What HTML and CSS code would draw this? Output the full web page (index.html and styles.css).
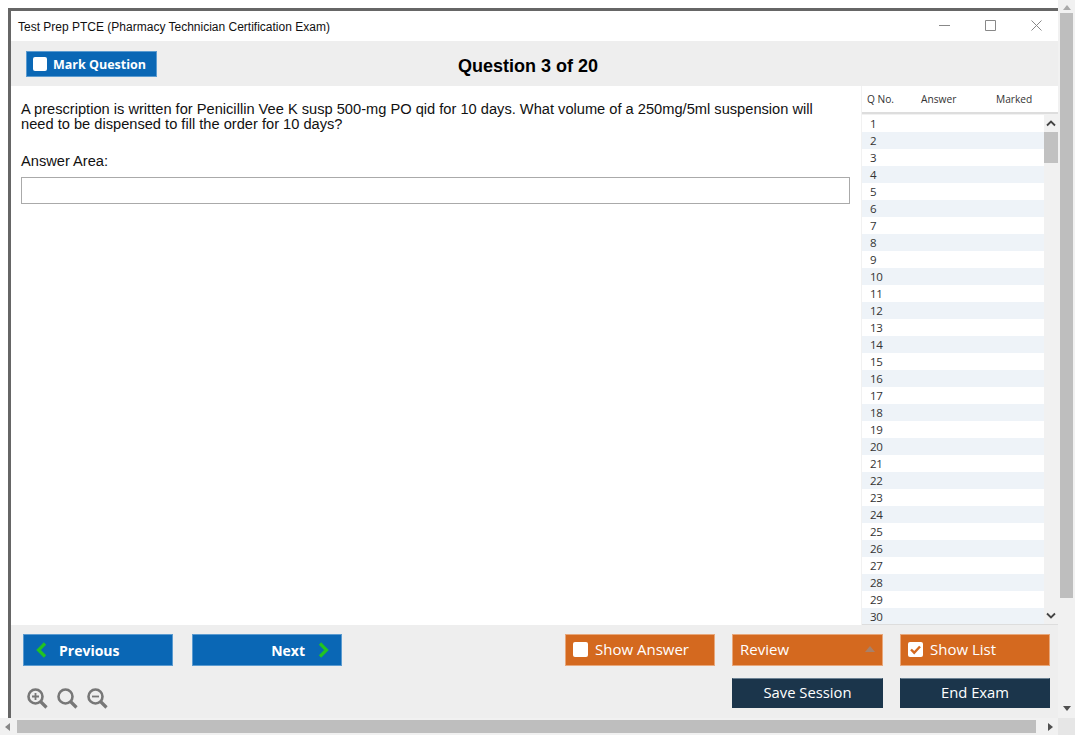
FILE: index.html
```html
<!DOCTYPE html>
<html lang="en">
<head>
  <meta charset="UTF-8">
  <meta name="viewport" content="width=device-width, initial-scale=1.0">
  <title>Test Prep PTCE</title>
  <link rel="stylesheet" href="styles.css">
</head>
<body>
  <div class="page">
    <div class="exam-window">
      <div class="title-bar">
        <span class="title-text">Test Prep PTCE (Pharmacy Technician Certification Exam)</span>
        <div class="window-controls">
          <svg width="11" height="11" viewBox="0 0 11 11"><path d="M0 5.500h11" stroke="#888" fill="none"/></svg>
          <svg width="11" height="11" viewBox="0 0 11 11"><path d="M.5.500h10v10H.5z" stroke="#888" fill="none"/></svg>
          <svg width="11" height="11" viewBox="0 0 11 11"><path d="M.5.500l10 10M10.500.500l-10 10" stroke="#888" fill="none"/></svg>
        </div>
      </div>

      <div class="tool-bar">
        <button class="btn btn-blue btn-mark"><span class="check-box"></span>Mark Question</button>
        <h1 class="question-count">Question 3 of 20</h1>
      </div>

      <div class="main-area">
        <div class="question-pane">
          <p class="question-text">A prescription is written for Penicillin Vee K susp 500-mg PO qid for 10 days. What volume of a 250mg/5ml suspension will need to be dispensed to fill the order for 10 days?</p>
          <label class="answer-label" for="answer">Answer Area:</label>
          <input class="answer-input" id="answer" type="text">
        </div>

        <div class="list-pane">
          <div class="list-head">
            <span class="col-no">Q No.</span>
            <span class="col-answer">Answer</span>
            <span class="col-marked">Marked</span>
          </div>
          <div class="list-body">
            <div class="list-rows">
              <div class="list-row">1</div>
              <div class="list-row">2</div>
              <div class="list-row">3</div>
              <div class="list-row">4</div>
              <div class="list-row">5</div>
              <div class="list-row">6</div>
              <div class="list-row">7</div>
              <div class="list-row">8</div>
              <div class="list-row">9</div>
              <div class="list-row">10</div>
              <div class="list-row">11</div>
              <div class="list-row">12</div>
              <div class="list-row">13</div>
              <div class="list-row">14</div>
              <div class="list-row">15</div>
              <div class="list-row">16</div>
              <div class="list-row">17</div>
              <div class="list-row">18</div>
              <div class="list-row">19</div>
              <div class="list-row">20</div>
              <div class="list-row">21</div>
              <div class="list-row">22</div>
              <div class="list-row">23</div>
              <div class="list-row">24</div>
              <div class="list-row">25</div>
              <div class="list-row">26</div>
              <div class="list-row">27</div>
              <div class="list-row">28</div>
              <div class="list-row">29</div>
              <div class="list-row">30</div>
            </div>
            <div class="list-scroll">
              <svg class="list-arrow" width="14" height="17" viewBox="0 0 14 17"><path d="M3 10.500L7 6.500l4 4" stroke="#444" stroke-width="1.800" fill="none"/></svg>
              <div class="list-track"><div class="list-thumb"></div></div>
              <svg class="list-arrow" width="14" height="17" viewBox="0 0 14 17"><path d="M3 6.500l4 4 4-4" stroke="#444" stroke-width="1.800" fill="none"/></svg>
            </div>
          </div>
        </div>
      </div>

      <div class="foot-bar">
        <div class="foot-left">
          <div class="nav-buttons">
            <button class="btn btn-blue btn-nav btn-prev">
              <svg width="12" height="16" viewBox="0 0 12 16"><path d="M10 1.500L3.500 8l6.500 6.500" stroke="#22c322" stroke-width="3.200" fill="none"/></svg>
              Previous
            </button>
            <button class="btn btn-blue btn-nav btn-next">
              Next
              <svg width="12" height="16" viewBox="0 0 12 16"><path d="M2 1.500L8.500 8 2 14.500" stroke="#22c322" stroke-width="3.200" fill="none"/></svg>
            </button>
          </div>
          <div class="zoom-icons">
            <svg width="21" height="21" viewBox="0 0 21 21"><circle cx="8.500" cy="8.500" r="7" stroke="#777" stroke-width="2.600" fill="none"/><path d="M13.500 13.500l6 6" stroke="#777" stroke-width="3.200" fill="none"/><path d="M5 8.500h7M8.500 5v7" stroke="#777" stroke-width="1.800" fill="none"/></svg>
            <svg width="21" height="21" viewBox="0 0 21 21"><circle cx="8.500" cy="8.500" r="7" stroke="#777" stroke-width="2.600" fill="none"/><path d="M13.500 13.500l6 6" stroke="#777" stroke-width="3.200" fill="none"/></svg>
            <svg width="21" height="21" viewBox="0 0 21 21"><circle cx="8.500" cy="8.500" r="7" stroke="#777" stroke-width="2.600" fill="none"/><path d="M13.500 13.500l6 6" stroke="#777" stroke-width="3.200" fill="none"/><path d="M5 8.500h7" stroke="#777" stroke-width="1.800" fill="none"/></svg>
          </div>
        </div>
        <div class="foot-right">
          <button class="btn btn-orange"><span class="check-box check-large"></span>Show Answer</button>
          <button class="btn btn-orange btn-review">Review<span class="up-caret"></span></button>
          <button class="btn btn-orange">
            <span class="check-box check-large">
              <svg width="15" height="15" viewBox="0 0 15 15"><path d="M3 7.500l3.200 3.200L12 4.500" stroke="#d4691f" stroke-width="2.400" fill="none"/></svg>
            </span>Show List
          </button>
          <button class="btn btn-navy btn-save">Save Session</button>
          <button class="btn btn-navy">End Exam</button>
        </div>
      </div>
    </div>

    <div class="page-vscroll">
      <span class="arrow arrow-up"></span>
      <div class="page-vthumb"></div>
      <span class="arrow arrow-down"></span>
    </div>
    <div class="page-hscroll">
      <span class="arrow arrow-left"></span>
      <div class="page-hthumb"></div>
      <span class="arrow arrow-right"></span>
    </div>
    <div class="page-corner"></div>
  </div>
</body>
</html>
```

FILE: styles.css
```css
html, body {
  margin: 0;
  height: 100%;
  overflow: hidden;
}

body {
  background-color: #fff;
  font-family: "Liberation Sans", Arial, sans-serif;
}

.page {
  display: grid;
  grid-template-columns: 1fr 17px;
  grid-template-rows: 1fr 17px;
  width: 1075px;
  height: 735px;
}

/* the window itself */
.exam-window {
  display: flex;
  flex-direction: column;
  margin: 8px 0 0 8px;
  border-top: 3px solid #666;
  border-left: 3px solid #666;
  background-color: #fff;
  min-height: 0;
}

.title-bar {
  display: flex;
  align-items: center;
  justify-content: space-between;
  height: 30px;
  padding-left: 7px;
  flex: none;
}

.title-text {
  padding-top: 2px;
  font-size: 12px;
  color: #111;
}

.window-controls {
  display: flex;
  gap: 35px;
  padding-right: 16px;
  padding-bottom: 2px;
}

.tool-bar {
  position: relative;
  display: flex;
  align-items: center;
  justify-content: center;
  height: 45px;
  flex: none;
  background-color: #eee;
}

.question-count {
  margin: 5px 13px 0 0;
  font-size: 18px;
  font-weight: bold;
  color: #000;
}

/* buttons */
.btn {
  display: flex;
  align-items: center;
  height: 32px;
  padding: 0;
  color: #fff;
  font-family: "Open Sans", "Noto Sans", sans-serif;
  font-size: 15px;
  border: 1px solid transparent;
  border-radius: 0;
}

.btn-blue {
  background-color: #0a67b5;
  border-color: #5b9bd0;
  font-size: 14px;
  font-weight: bold;
}

.btn-orange {
  background-color: #d4691f;
  border-color: #e8a77a;
  padding-left: 7px;
  padding-bottom: 2px;
}

.btn-navy {
  background-color: #1b354b;
  border-color: #1b354b;
  border-top-color: #6d8394;
  height: 30px;
  padding-bottom: 2px;
  justify-content: center;
  font-size: 14.800px;
}

.btn-mark {
  position: absolute;
  left: 15px;
  top: 10px;
  width: 131px;
  height: 26px;
  padding-left: 6px;
  font-size: 12.500px;
}

.check-box {
  display: inline-block;
  width: 14px;
  height: 14px;
  margin-right: 6px;
  background-color: #fff;
  border-radius: 2px;
}

.check-large {
  display: flex;
  width: 15px;
  height: 15px;
  margin-right: 7px;
}

/* question area */
.main-area {
  display: flex;
  flex: 1;
  min-height: 0;
}

.question-pane {
  flex: 1;
  display: flex;
  flex-direction: column;
  padding: 16px 11px 0 10px;
}

.question-text {
  margin: 0;
  font-size: 14.650px;
  line-height: 15px;
  color: #111;
  max-width: 800px;
}

.answer-label {
  margin-top: 21px;
  font-size: 14.650px;
  line-height: 17px;
  color: #111;
}

.answer-input {
  box-sizing: border-box;
  width: 100%;
  height: 27px;
  margin-top: 7px;
  border: 1px solid #aaa;
  background-color: #fff;
}

/* question list */
.list-pane {
  width: 197px;
  flex: none;
  display: flex;
  flex-direction: column;
  background-color: #f1f1f1;
  font-family: "Open Sans", "Noto Sans", sans-serif;
  color: #333;
}

.list-head {
  display: flex;
  align-items: center;
  height: 26px;
  margin-left: 1px;
  background-color: #fff;
  border-bottom: 2px solid #ddd;
  font-size: 10.200px;
  flex: none;
}

.col-no {
  width: 59px;
  padding-left: 5px;
  box-sizing: border-box;
}

.col-answer {
  width: 75px;
}

.list-body {
  display: flex;
  flex: 1;
  min-height: 0;
  margin-top: 1px;
  margin-left: 1px;
  overflow: hidden;
  border-bottom: 1px solid #ddd;
}

.list-rows {
  width: 182px;
  flex: none;
}

.list-row {
  height: 17px;
  line-height: 17px;
  padding-left: 8px;
  font-size: 11.500px;
  letter-spacing: -.4px;
  background-color: #fff;
}

.list-row:nth-child(even) {
  background-color: #eef3f8;
}

.list-scroll {
  display: flex;
  flex-direction: column;
  width: 14px;
  background-color: #f1f1f1;
}

.list-track {
  flex: 1;
}

.list-thumb {
  height: 31px;
  background-color: #c1c1c1;
}

.list-arrow {
  flex: none;
}

/* bottom bar */
.foot-bar {
  display: flex;
  justify-content: space-between;
  height: 93px;
  flex: none;
  box-sizing: border-box;
  padding: 9px 8px 0 12px;
  background-color: #eee;
}

.nav-buttons {
  display: flex;
  gap: 19px;
}

.btn-nav {
  width: 150px;
}

.btn-prev {
  gap: 12px;
  padding-left: 11px;
}

.btn-next {
  justify-content: flex-end;
  gap: 13px;
  padding-right: 11px;
}

.zoom-icons {
  display: flex;
  gap: 9px;
  margin-top: 22px;
  margin-left: 4px;
}

.foot-right {
  display: grid;
  grid-template-columns: 150px 151px 150px;
  grid-template-rows: 32px 30px;
  column-gap: 17px;
  row-gap: 12px;
}

.btn-review {
  justify-content: space-between;
  padding-right: 7px;
}

.up-caret {
  width: 0;
  height: 0;
  border-left: 5px solid transparent;
  border-right: 5px solid transparent;
  border-bottom: 6px solid #a8806a;
}

.btn-save {
  grid-column: 2;
}

/* browser scrollbars of the page */
.page-vscroll,
.page-hscroll {
  display: flex;
  background-color: #f1f1f1;
}

.page-vscroll {
  flex-direction: column;
  align-items: flex-start;
}

.page-vthumb {
  width: 13px;
  height: 585px;
  margin-left: 2px;
  background-color: #bebebe;
}

.page-hscroll {
  align-items: center;
}

.page-hthumb {
  width: 1019px;
  height: 13px;
  background-color: #bebebe;
}

.page-corner {
  background-color: #e6e6e6;
}

.arrow {
  flex: none;
  width: 0;
  height: 0;
  border: 4px solid transparent;
}

.arrow-up {
  margin: 5px 0 3px 5px;
  border-top-width: 0;
  border-bottom: 5px solid #aaa;
}

.arrow-down {
  margin: auto 0 7px 5px;
  border-bottom-width: 0;
  border-top: 5px solid #505050;
}

.arrow-left {
  margin: 0 7px 0 5px;
  border-left-width: 0;
  border-right: 5px solid #888;
}

.arrow-right {
  margin: 0 0 0 12px;
  border-right-width: 0;
  border-left: 5px solid #505050;
}
```
